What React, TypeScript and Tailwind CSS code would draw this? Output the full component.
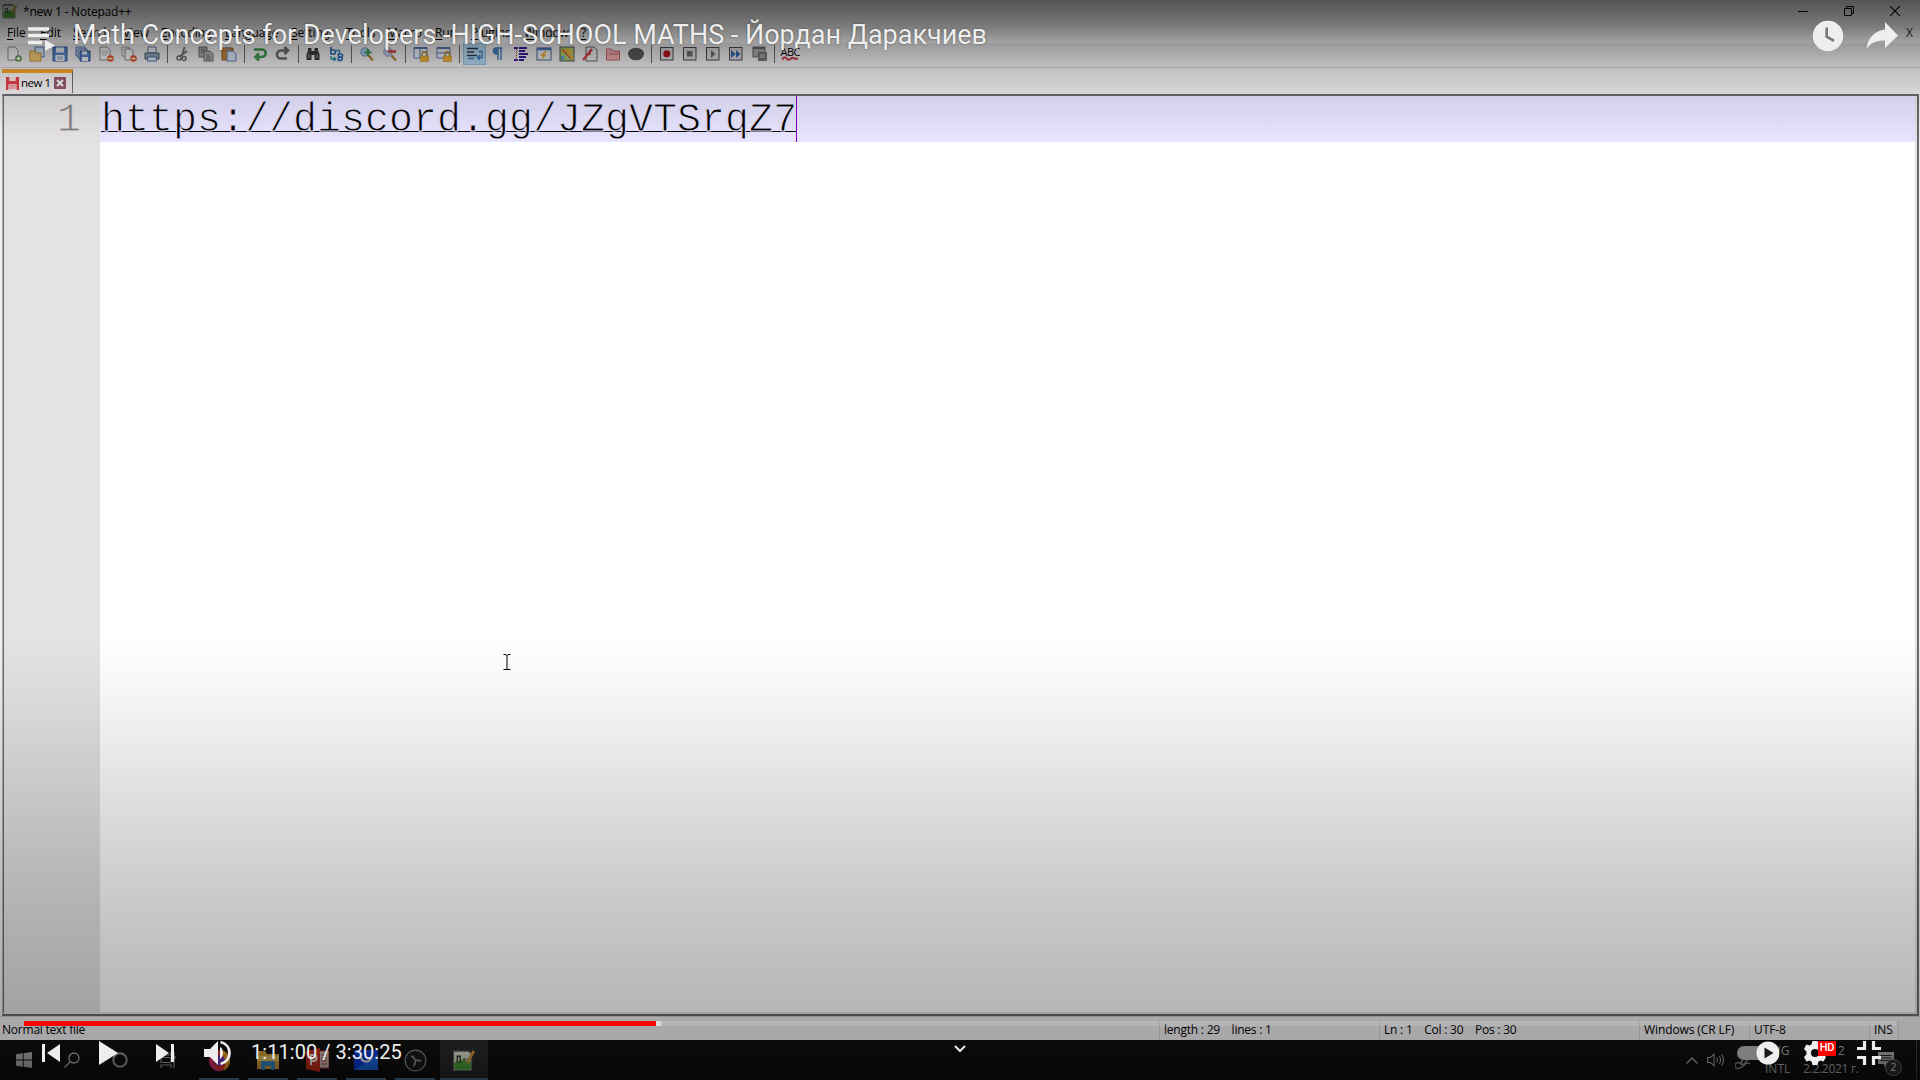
import React from 'react';

const S = ({ children, w = 18, h = 18, vb = '0 0 16 16', className = '' }: any) => (
  <svg width={w} height={h} viewBox={vb} fill="none" className={'shrink-0 ' + className}>{children}</svg>
);

const Page = ({ x = 2, y = 1 }: any) => (
  <path d={`M${x} ${y}h7l3 3v10h-10z`} fill="#f8f8f8" stroke="#8b8b8b" />
);
const Lock = () => (
  <g><path d="M9 10V8a2.3 2.3 0 0 1 4.600 0v2" stroke="#b98a2c" strokeWidth="1.400" /><rect x="7.500" y="10" width="8" height="5.500" fill="#f2b537" stroke="#c08a25" strokeWidth=".6" /></g>
);
const Frame = () => <rect x="1.500" y="1.500" width="12.500" height="12.500" stroke="#4c4c4c" fill="#dcdcdc" />;

const icons: Record<string, React.ReactNode> = {
  new: <><Page /><circle cx="12.500" cy="12.500" r="3.300" fill="#4f9140" /><path d="M12.500 10.500v4M10.500 12.500h4" stroke="#fff" strokeWidth="1.300" /></>,
  open: <><rect x="6" y="1" width="9" height="10" fill="#d5e5fb" stroke="#5c7cae" /><path d="M1 5h5l1 2h5v8H1z" fill="#f6cf7a" stroke="#c48d35" /></>,
  save: <><path d="M1 1h14v14H1z" fill="#5b84cc" stroke="#31528f" /><rect x="4" y="1.500" width="8" height="5" fill="#eaf1fb" /><rect x="3.500" y="9" width="9" height="6" fill="#f2f2f2" /><path d="M5 11h6M5 13h6" stroke="#7c9bc9" /></>,
  saveall: <><path d="M1 1h9v9H1z" fill="#d5e2f5" stroke="#4a6fae" /><path d="M3 3h9v9H3z" fill="#d5e2f5" stroke="#4a6fae" /><path d="M5 5h10v10H5z" fill="#5b84cc" stroke="#31528f" /><path d="M7 5.500h5v3H7zM7 11h6v4H7z" fill="#eef3fa" /></>,
  close: <><Page /><path d="M4 5h6M4 7h6M4 9h5" stroke="#b5b5b5" /><circle cx="12.500" cy="12.500" r="3.300" fill="#de5a26" /><path d="M10.500 12.500h4" stroke="#fff" strokeWidth="1.400" /></>,
  closeall: <><path d="M1 1h7v9H1z" fill="#eee" stroke="#999" /><path d="M4 3h6l2 2v9H4z" fill="#f8f8f8" stroke="#8b8b8b" /><circle cx="12.500" cy="12.500" r="3.300" fill="#de5a26" /><path d="M10.500 12.500h4" stroke="#fff" strokeWidth="1.400" /></>,
  print: <><path d="M4 1h8v6H4z" fill="#e8eefc" stroke="#6677a0" /><path d="M1 7h14v6H1z" fill="#93a7bd" stroke="#4b5866" /><path d="M3.500 11h9v4h-9z" fill="#e3ecf8" stroke="#4b6b9d" /></>,
  cut: <><path d="M9.500 1 7 10M12 5 4.500 10.500" stroke="#6d6d6d" strokeWidth="1.800" /><circle cx="4" cy="12" r="2" stroke="#6d6d6d" strokeWidth="1.500" /><circle cx="9" cy="12.500" r="2" stroke="#6d6d6d" strokeWidth="1.500" /></>,
  copy: <><path d="M1 1h8v10H1z" fill="#aaa" stroke="#6b6b6b" /><path d="M6 5h6l3 3v7H6z" fill="#b9b9b9" stroke="#6b6b6b" /><path d="M3 4h4M3 6h2M8 9h4M8 11h5M8 13h5" stroke="#6b6b6b" /></>,
  paste: <><path d="M1 2h11v12H1z" fill="#c8873a" stroke="#8f5b20" /><path d="M4 .8h5v2.500H4z" fill="#8c8c8c" /><path d="M6 5h6l3 3v7H6z" fill="#dbe7fb" stroke="#5d7fb8" /></>,
  undo: <path d="M2 3.500h8a3.500 3.500 0 0 1 0 7.500H4M7 7.500 3.500 11 7 14.500" stroke="#3d9a4d" strokeWidth="2.600" />,
  redo: <path d="M13 4.500H6a3.500 3.500 0 0 0 0 8h6M9.500 1 13 4.500 9.500 8" stroke="#6d6d6d" strokeWidth="2.600" />,
  find: <><path d="M3 2h3.500v3H9.500V2H13v3l1.500 3v6h-5V9h-3v5h-5V8L3 5z" fill="#3a3a3a" /><path d="M3 9h2M11 9h2M3 11h2M11 11h2" stroke="#aaa" /></>,
  replace: <><path d="M2 1v7h2.500a2 2 0 0 0 0-4H2M9.500 8v6.500h2.500a1.700 1.700 0 0 0 0-3.300H9.500h2.500a1.600 1.600 0 0 0 0-3.200z" stroke="#2a6db5" strokeWidth="1.700" /><path d="M6.500 4.500h4v3M2 10v3h4M4.500 11 7 13l-2.500 2" stroke="#2a8da5" strokeWidth="1.300" /></>,
  zin: <><path d="m9.500 9.500 4.500 5" stroke="#b9803c" strokeWidth="2.400" /><circle cx="6" cy="6" r="4.200" fill="#a9cdf5" stroke="#7d97b9" /><path d="M9 3v7M5.500 6.500h7" stroke="#3d9a4d" strokeWidth="2.200" /></>,
  zout: <><path d="m9.500 9.500 4.500 5" stroke="#b9803c" strokeWidth="2.400" /><circle cx="6" cy="6" r="4.200" fill="#c5cdf0" stroke="#8d97b9" /><path d="M6 5.500h8" stroke="#d8484f" strokeWidth="2.600" /></>,
  syncv: <><path d="M1 1.500h13V12H1zM7 2v10" fill="#eef3fb" stroke="#5877b0" /><path d="M1 2h13" stroke="#5877b0" strokeWidth="2" /><Lock /></>,
  synch: <><path d="M1 1.500h13V12H1zM1 7h13" fill="#eef3fb" stroke="#5877b0" /><path d="M1 2h13" stroke="#5877b0" strokeWidth="2" /><Lock /></>,
  wrap: <><path d="M0 2.500h11M0 6h7M0 9.500h10" stroke="#2b3a4a" strokeWidth="1.500" /><path d="M12 5.500h3v6h-4M13 9l-2.500 2.500L13 14M1 12.500h6" stroke="#3b7dc0" strokeWidth="1.300" /></>,
  pil: <path d="M8 2v12M11 2v12M12.500 2H6.500a3 3 0 0 0 0 6H8V2z" stroke="#4b83bd" strokeWidth="1.500" fill="#4b83bd" />,
  indent: <><path d="M1 2h4M6 2h8M6 5h6M6 8h9M6 11h7M1 14h4M6 14h5" stroke="#3b1d9c" strokeWidth="1.900" /><path d="M3.500 3v11" stroke="#b33" strokeDasharray="1 1" /></>,
  lang: <><rect x="1" y="2" width="14" height="12" fill="#eceff6" stroke="#50638c" /><path d="M1 3h14" stroke="#4a73be" strokeWidth="2.500" /><path d="m9 5-5 5h3l-2 4 6-5.500H8L11 5z" fill="#f0aa2c" /></>,
  map: <><rect x="1" y="1" width="14" height="14" fill="#a9cc74" stroke="#565656" /><path d="M2 5h6l6 8M9 2v5l5-3" stroke="#e8b93c" strokeWidth="2.500" /><path d="m3 3 9 10" stroke="#d0533c" strokeWidth="1.200" /><path d="M2 10h3v4H2z" fill="#69a2d9" /></>,
  func: <><path d="M4 1h8l3 3v11H4z" fill="#eee" stroke="#666" /><path d="m1 14 6-7 3-4" stroke="#d54450" strokeWidth="2.600" /><path d="M4 8h5" stroke="#d54450" strokeWidth="1.500" /></>,
  folder: <><path d="M1.500 3h5l1 2h7v9h-13z" fill="#f4b0b4" stroke="#c4606a" /><path d="M4 8h10.500" stroke="#c4606a" /></>,
  eye: <ellipse cx="8" cy="8" rx="8" ry="6.300" fill="#5c5c5c" />,
  rec: <><Frame /><circle cx="7.800" cy="7.800" r="3.500" fill="#b3151d" /></>,
  stop: <><Frame /><rect x="5" y="5" width="5.500" height="5.500" fill="#6d6d6d" /></>,
  play: <><Frame /><path d="m6 4 4.500 4L6 12z" fill="#6d6d6d" /></>,
  ff: <><Frame /><path d="m3 4 4.500 4L3 12zM8 4l4.500 4L8 12z" fill="#3068b8" /></>,
  multi: <><rect x="1" y="1" width="12" height="10" fill="#aaa" stroke="#6b6b6b" /><path d="M1 2h12" stroke="#6b6b6b" strokeWidth="2" /><path d="M6 6h9v9H6z" fill="#777" /><path d="M3 5h2M3 7h2M8 9h5M8 11h5" stroke="#ccc" /></>,
};

const toolbar = 'new open save saveall close closeall print | cut copy paste | undo redo | find replace | zin zout | syncv synch | wrap pil indent lang map func folder eye | rec stop play ff multi | abc'.split(' ');

const Npp = ({ size = 16 }: any) => (
  <S w={size} h={size}>
    <path d="M1 2h10l2 2v11H1z" fill="#e8f0dc" stroke="#666" strokeWidth=".8" />
    <path d="M1.500 10c4-3 7-2 11-1v5.500h-11z" fill="#4fae3a" />
    <path d="M2 1.800h10" stroke="#444" strokeWidth="1.400" strokeDasharray="1 1" />
    <path d="M3.500 10V5.500h2V10M7.500 7.500h1.500M10 7.500h1.500" stroke="#3b3b3b" strokeWidth=".9" />
    <path d="m14.500 2-4.500 8" stroke="#dba040" strokeWidth="2" />
  </S>
);

const menus: [string, string, string][] = [
  ['F', 'ile', 'w-[33px]'], ['E', 'dit', 'w-[33px]'], ['S', 'earch', 'w-[50px]'], ['V', 'iew', 'w-[38px]'],
  ['E', 'ncoding', 'w-[64px]'], ['L', 'anguage', 'w-[66px]'], ['S', 'ettings', 'w-[55px]'], ['T', 'ools', 'w-[41px]'],
  ['M', 'acro', 'w-[48px]'], ['R', 'un', 'w-[36px]'], ['P', 'lugins', 'w-[53px]'], ['W', 'indow', 'w-[57px]'], ['?', '', 'w-[20px]'],
];

function Notepad() {
  return (
    <div className="flex h-[1040px] flex-col bg-[#f0eef0] font-['Open_Sans',sans-serif] text-[12px] text-black">
      <div className="flex h-[23px] items-center bg-white pb-[2px] pl-[2px]">
        <Npp size={16} />
        <span className="ml-[5px] grow pt-[2px] leading-[16px] tracking-[-0.22px]">*new 1 - Notepad++</span>
        <div className="flex items-center gap-[36px] pr-[20px]">
          <S w={10} h={10} vb="0 0 10 10"><path d="M0 5.500h10" stroke="#000" /></S>
          <S w={10} h={10} vb="0 0 10 10"><path d="M.5 2.500h7v7h-7zM2.500 2.500v-2h7v7h-2" stroke="#000" /></S>
          <S w={10} h={10} vb="0 0 10 10"><path d="m0 0 10 10M10 0 0 10" stroke="#000" strokeWidth="1.100" /></S>
        </div>
      </div>
      <div className="flex h-[20px] items-center bg-white pb-px pl-[7px] leading-[18px]">
        {menus.map(([a, b, w], i) => (
          <span key={i} className={'shrink-0 tracking-[-0.1px] ' + w}><span className="underline underline-offset-2">{a}</span>{b}</span>
        ))}
        <span className="grow" />
        <span className="pr-[7px] text-[12px] text-[#333]">X</span>
      </div>
      <div className="flex h-[25px] items-center border-b border-[#cfcfcf] pb-[2px] pl-[2px]">
        {toolbar.map((k, i) =>
          k === '|' ? (
            <span key={i} className="flex w-[7.6px] shrink-0 justify-center"><span className="h-[18px] w-px bg-[#6b6b6b]" /></span>
          ) : (
            <span key={i} className={'flex h-[22px] w-[23.1px] shrink-0 items-center justify-center ' + (k === 'wrap' ? 'border border-[#8ec3ea] bg-[#b9dcf6]' : '')}>
              {k === 'abc' ? (
                <span className="flex flex-col items-center">
                  <span className="text-[11px] leading-[9px] tracking-[-0.5px]">ABC</span>
                  <S w={16} h={5} vb="0 0 16 5"><path d="M0 4c2-4 3-3 5-1s3 0 5-1 3 3 6 0" stroke="#d23c4c" strokeWidth="2" /></S>
                </span>
              ) : <S w={16} h={16}>{icons[k]}</S>}
            </span>
          ),
        )}
      </div>
      <div className="flex h-[26px] items-end pb-px pl-[2px]">
        <div className="flex h-[24px] w-[71px] items-center border-r border-t-[4px] border-r-[#6e6e6e] border-t-[#f5a22c] bg-[#f4f0f2] pl-[4px]">
          <S w={13} h={13}><path d="M0 0h16v16H0z" fill="#e2404a" /><path d="M4 0h8v5H4zM3 9h10v7H3z" fill="#fbe3e4" /><path d="M4 11h8M4 13.500h8" stroke="#e2404a" /></S>
          <span className="ml-[2px] w-[31px] whitespace-nowrap text-[11.5px] tracking-[-0.45px]">new 1</span>
          <S w={12} h={12} className="ml-[2px]"><rect width="16" height="16" rx="1" fill="#97596f" /><path d="m4 4 8 8M12 4l-8 8" stroke="#fff" strokeWidth="2.600" /></S>
        </div>
      </div>
      <div className="ml-[2px] mr-px flex h-[922px] flex-col border-b-2 border-l border-r-2 border-t-2 border-[#6a6a6e] border-l-[#b0b0b0]">
        <div className="flex grow border-b-2 border-l border-r-2 border-[#e3e3e3] border-l-[#696969] bg-white">
          <div className="h-full w-[96px] shrink-0 bg-[#e5e2e4] pl-[53px] font-['Liberation_Mono',monospace] text-[40px] leading-[50px] text-[#808080] [-webkit-text-stroke:1px_#e5e2e4]">1</div>
          <div className="grow">
            <div className="flex h-[46px] bg-[#e8e4ff]">
              <span className="flex h-[46px] items-start border-r border-[#8000c0] pl-px">
                <span className="block h-[36px] w-[695px] whitespace-nowrap border-b border-black font-['Liberation_Mono',monospace] text-[40px] leading-[50px] [-webkit-text-stroke:1px_#e8e4ff]">https://discord.gg/JZgVTSrqZ7</span>
              </span>
            </div>
          </div>
        </div>
      </div>
      <div className="flex h-[24px] items-center border-t border-[#cfcfcf] pl-[2px] pt-[3px] tracking-[-0.22px]">
        <span className="w-[1157px]">Normal text file</span>
        <span className="h-full w-[220px] whitespace-pre border-l border-[#d8d8d8] pl-[4px] leading-[19px]">length : 29{'    '}lines : 1</span>
        <span className="h-full w-[260px] whitespace-pre border-l border-[#d8d8d8] pl-[4px] leading-[19px]">Ln : 1{'    '}Col : 30{'    '}Pos : 30</span>
        <span className="h-full w-[110px] border-l border-[#d8d8d8] pl-[4px] leading-[19px] tracking-[-0.1px]">Windows (CR LF)</span>
        <span className="h-full w-[120px] border-l border-[#d8d8d8] pl-[4px] leading-[19px] tracking-[-0.1px]">UTF-8</span>
        <span className="h-full w-[30px] border-x border-[#d8d8d8] pl-[4px] leading-[19px] tracking-[-0.1px]">INS</span>
      </div>
    </div>
  );
}

const Task = ({ children, open, active }: any) => (
  <div className={'relative flex h-[40px] w-[48px] shrink-0 items-center justify-center ' + (active ? 'bg-[#2b2b2b]' : '')}>
    {children}
    {open && <span className={'absolute bottom-0 h-[2px] bg-[#4c7fa8] ' + (active ? 'w-[48px]' : 'w-[40px]')} />}
  </div>
);

function Taskbar() {
  return (
    <div className="flex h-[40px] items-center bg-[#101010] font-['Open_Sans',sans-serif] text-[12px] text-[#b5b5b5]">
      <Task><S w={16} h={16}><path d="M0 2.300 6.800 1.300V7.600H0zM7.700 1.200 16 0v7.600H7.700zM0 8.400h6.800v6.300L0 13.700zM7.700 8.400H16V16l-8.300-1.200z" fill="#b5b5b5" /></S></Task>
      <Task><S w={16} h={16}><circle cx="10" cy="6" r="5" stroke="#b5b5b5" strokeWidth="1.300" /><path d="m6.500 9.500-6 6" stroke="#b5b5b5" strokeWidth="1.300" /></S></Task>
      <Task><S w={16} h={16}><circle cx="8" cy="8" r="6.700" stroke="#a0a0a0" strokeWidth="1.900" /></S></Task>
      <Task><S w={16} h={16}><path d="M1 0v3h10V0M1 16v-3h10v3M1 5.500h10v5H1zM14 0v16" stroke="#a0a0a0" strokeWidth="1.200" /><path d="M14 4v3" stroke="#a0a0a0" strokeWidth="3" /></S></Task>
      <div className="ml-[3px] flex gap-px">
        <Task open>
          <S w={23} h={23} vb="0 0 24 24"><circle cx="12" cy="12" r="11" fill="#e3372f" /><path d="M12 1a11 11 0 0 1 11 11c0 5-3 9-7 10.500 3-5 3-12-4-21.500z" fill="#f0a52c" /><circle cx="12" cy="12" r="5.500" fill="#7a35c8" /><path d="M1 12a11 11 0 0 0 16 10C9 22 4 18 4 8z" fill="#d92a73" /></S>
        </Task>
        <Task open>
          <S w={22} h={20} vb="0 0 22 20"><path d="M0 1h8l2 3h12v15H0z" fill="#dca93e" /><path d="M0 6h22v5H0z" fill="#f3cf6c" /><path d="M4 11h14v9h-4v-4H8v4H4z" fill="#3c8fd0" /></S>
        </Task>
        <Task open>
          <S w={23} h={24} vb="0 0 23 24"><path d="M11 3h12v17H11z" fill="#d8c6c2" stroke="#b53c28" /><path d="M15 7h6M15 10h6M15 13h6M15 16h6" stroke="#b5402c" /><path d="M0 3 14 0v24L0 21z" fill="#d0301c" /><path d="M5 17V7h2.500a3 3 0 0 1 0 6H5" stroke="#fff" strokeWidth="2" /></S>
        </Task>
        <Task open>
          <S w={24} h={20} vb="0 0 24 20"><rect width="24" height="20" rx="1" fill="#0a3fe0" /><path d="M0 20 24 4v16z" fill="#1d6cf0" /><path d="M7 7c1 6 9 6 10 0" stroke="#fff" strokeWidth="2" /></S>
        </Task>
        <Task open>
          <S w={23} h={23} vb="0 0 24 24"><circle cx="12" cy="12" r="10.800" fill="#1a1a1a" stroke="#8c8c8c" strokeWidth="1.300" /><path d="M12 12c-1-3-3-3-4-5M12 12c3-1 4 1 6 0M12 12c-1 3 0 4-2 6" stroke="#8c8c8c" strokeWidth="2" /></S>
        </Task>
        <Task open active><Npp size={24} /></Task>
      </div>
      <div className="grow" />
      <div className="flex h-[40px] items-center">
        <S w={12} h={7} vb="0 0 12 7"><path d="m.5 6.500 5.500-5.500 5.500 5.500" stroke="#b5b5b5" strokeWidth="1.300" /></S>
        <S w={17} h={14} vb="0 0 17 14" className="ml-[9px]"><path d="M.7 4.500h2.800L7 1.200v11.600L3.500 9.500H.7zM9.500 4.500c1.300 1.500 1.300 3.500 0 5M12 3c2.200 2.500 2.200 5.500 0 8M14.500 1.500c2.700 3.500 2.700 7.500 0 11" stroke="#a5a5a5" strokeWidth="1.100" /></S>
        <S w={17} h={17} className="ml-[11px]"><path d="m6 9 6-8 3 2-6 8-3 1zM6 11c-8-4-8 7-1 4 5-2 4-6 9-4" stroke="#a0a0a0" strokeWidth="1.200" /></S>
        <div className="ml-[13px] w-[24px] whitespace-nowrap text-center leading-[18px]"><div>ENG</div><div>INTL</div></div>
        <div className="ml-[14px] w-[54px] whitespace-nowrap leading-[18px]"><div className="pl-[28px]">12</div><div className="tracking-[-0.3px]">2.2.2021 г.</div></div>
        <div className="relative ml-[21px] mr-[21px] h-[17px] w-[17px]">
          <S w={16} h={16}><path d="M0 0h16v12H9l-3 3v-3H0z" fill="#b5b5b5" /><path d="M2.500 3.500h11M2.500 6h11M2.500 8.500h11" stroke="#222" /></S>
          <span className="absolute left-[7px] top-[7px] flex h-[17px] w-[17px] items-center justify-center rounded-full border border-[#777] bg-[#2d2d2d] text-[11px] text-[#ddd]">2</span>
        </div>
        <div className="h-[40px] w-[4px] border-l border-[#444]" />
      </div>
    </div>
  );
}

function Player() {
  return (
    <div className="absolute inset-0 flex flex-col font-['Roboto',sans-serif] text-[#eeeeee]">
      <div className="flex h-[150px] items-start bg-[linear-gradient(to_bottom,rgba(0,0,0,.67)_0px,rgba(0,0,0,.53)_25px,rgba(0,0,0,.36)_43px,rgba(0,0,0,.2)_67px,rgba(0,0,0,.09)_96px,rgba(0,0,0,0)_142px)] pl-[28px] pr-[22px]">
        <S w={27} h={25} vb="0 0 27 25" className="mt-[26px]"><path d="M0 3h21M0 9.500h21M0 16.500h14" stroke="#eee" strokeWidth="3.400" /><path d="m17 14 10 5.500L17 25z" fill="#eee" /></S>
        <span className="ml-[18px] mt-[17px] grow whitespace-nowrap text-[27px] leading-[36px] tracking-[-0.02px] [text-shadow:0_0_2px_rgba(0,0,0,.5)]">Math Concepts for Developers -HIGH-SCHOOL MATHS - Йордан Даракчиев</span>
        <S w={32} h={32} vb="0 0 32 32" className="mt-[20px]"><circle cx="16" cy="16" r="15.200" fill="#eee" /><path d="M14.700 7.500v9.200l7.300 4.200" stroke="#777" strokeWidth="2.600" /></S>
        <S w={32} h={28} vb="0 0 32 28" className="ml-[22px] mt-[22px]"><path d="M19 0 32 13.500 19 26v-7.500C10 18.500 4 21 .5 27 1.500 16.500 8 9 19 7.500z" fill="#eee" /></S>
      </div>
      <div className="flex h-[930px] flex-col justify-end bg-[linear-gradient(to_bottom,rgba(0,0,0,0)_485px,rgba(0,0,0,.045)_550px,rgba(0,0,0,.13)_650px,rgba(0,0,0,.21)_750px,rgba(0,0,0,.28)_850px,rgba(0,0,0,.3)_890px,rgba(0,0,0,.55)_930px)]">
        <div className="mx-[24px] flex h-[5px] bg-white/15">
          <div className="w-[632px] bg-[#ff0000]" />
          <div className="w-[5px] bg-white/50" />
        </div>
        <div className="relative flex h-[54px] items-center px-[42px] pb-px">
          <S w={18} h={18} vb="0 0 18 18"><path d="M0 0h3v18H0zM18 0v18L5 9z" fill="#eee" /></S>
          <S w={19} h={24} vb="0 0 19 24" className="ml-[39px]"><path d="M0 0v24l19-12z" fill="#eee" /></S>
          <S w={18} h={18} vb="0 0 18 18" className="ml-[38px]"><path d="M15 0h3v18h-3zM0 0v18L13 9z" fill="#eee" /></S>
          <S w={27} h={26} vb="0 0 27 26" className="ml-[30px]"><path d="M0 9h6l8-8v24l-8-8H0zM16 7c4 1.500 4 10 0 12z" fill="#eee" /><path d="M16.500 2c12 3 12 19 0 22" stroke="#eee" strokeWidth="2.800" /></S>
          <span className="ml-[20px] whitespace-nowrap pb-[2px] text-[20px] leading-[24px] tracking-[0.05px]">1:11:00 / 3:30:25</span>
          <S w={12} h={8} vb="0 0 12 8" className="absolute left-[954px] top-[19px]"><path d="m1 1 5 5 5-5" stroke="#eee" strokeWidth="2" /></S>
          <span className="grow" />
          <S w={42} h={24} vb="0 0 42 24"><rect y="5" width="36" height="14" rx="7" fill="#7d7d7d" /><circle cx="31" cy="12" r="11.500" fill="#eee" /><path d="m27.500 6.500 9 5.500-9 5.500z" fill="#1a1a1a" /></S>
          <div className="relative ml-[24px] h-[24px] w-[24px]">
            <S w={24} h={24} vb="0 0 24 24"><path fillRule="evenodd" d="M9.500 0h5l.8 3.300 2 1.200 3.300-1L23 8l-2.400 2.500v3L23 16l-2.400 4.500-3.300-1-2 1.200-.8 3.300h-5l-.8-3.300-2-1.200-3.300 1L1 16l2.400-2.500v-3L1 8l2.400-4.500 3.300 1 2-1.200zM12 8a4 4 0 1 0 0 8 4 4 0 0 0 0-8z" fill="#eee" /></S>
            <span className="absolute left-[15px] top-0 flex h-[15px] w-[18px] items-center justify-center bg-[#ff0000] text-[11px] font-medium tracking-[-0.3px] text-white">HD</span>
          </div>
          <S w={24} h={24} vb="0 0 24 24" className="ml-[30px] mr-[-3px]"><path d="M7.500 0v7.500H0M16.500 0v7.500H24M7.500 24v-7.500H0M16.500 24v-7.500H24" stroke="#eee" strokeWidth="3.200" /></S>
        </div>
      </div>
    </div>
  );
}

export default function App() {
  return (
    <div className="relative h-[1080px] w-[1920px] overflow-hidden bg-white">
      <Notepad />
      <Taskbar />
      <Player />
      <svg width="8" height="16" viewBox="0 0 8 16" className="absolute left-[503px] top-[654px]"><path d="M.5.500h2.500l1 1 1-1h2.500M4 1v14M.5 15.500h7" stroke="#000" fill="none" /></svg>
    </div>
  );
}
